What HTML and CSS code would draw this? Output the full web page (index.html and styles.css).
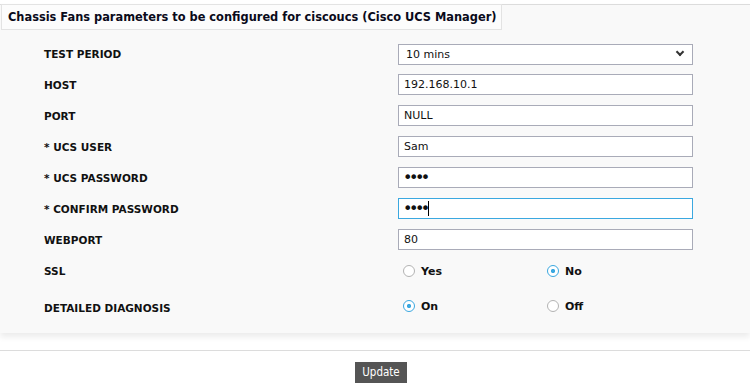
FILE: index.html
```html
<!DOCTYPE html>
<html lang="en">
<head>
    <meta charset="UTF-8">
    <meta name="viewport" content="width=device-width, initial-scale=1.0">
    <title>Chassis Fans parameters</title>
    <link rel="stylesheet" href="styles.css">
</head>
<body>
    <div class="panel">
        <div class="panel-title">Chassis Fans parameters to be configured for ciscoucs (Cisco UCS Manager)</div>

        <div class="form">
            <div class="row">
                <label class="label">TEST PERIOD</label>
                <div class="select-wrap">
                    <select class="field">
                        <option>10 mins</option>
                    </select>
                </div>
            </div>
            <div class="row">
                <label class="label">HOST</label>
                <input class="field" type="text" value="192.168.10.1">
            </div>
            <div class="row">
                <label class="label">PORT</label>
                <input class="field" type="text" value="NULL">
            </div>
            <div class="row">
                <label class="label">* UCS USER</label>
                <input class="field" type="text" value="Sam">
            </div>
            <div class="row">
                <label class="label">* UCS PASSWORD</label>
                <input class="field" type="password" value="abcd">
            </div>
            <div class="row">
                <label class="label">* CONFIRM PASSWORD</label>
                <div class="caret-wrap">
                    <input class="field active" type="password" value="abcd">
                </div>
            </div>
            <div class="row">
                <label class="label">WEBPORT</label>
                <input class="field" type="text" value="80">
            </div>
            <div class="row row-radio">
                <label class="label">SSL</label>
                <div class="radios">
                    <label class="option"><input type="radio" name="ssl"> Yes</label>
                    <label class="option"><input type="radio" name="ssl" checked> No</label>
                </div>
            </div>
            <div class="row row-radio row-last">
                <label class="label">DETAILED DIAGNOSIS</label>
                <div class="radios">
                    <label class="option"><input type="radio" name="dd" checked> On</label>
                    <label class="option"><input type="radio" name="dd"> Off</label>
                </div>
            </div>
        </div>
    </div>

    <div class="actions">
        <input type="button" class="btn" value="Update">
    </div>
</body>
</html>
```

FILE: styles.css
```css
body {
    margin: 0;
    background-color: #ffffff;
    font-family: "DejaVu Sans", Verdana, sans-serif;
    color: #111;
}
.panel {
    margin-top: 4px;
    border-top: 1px solid #dcdcdc;
    background-color: #f9f9f9;
    box-shadow: 0 4px 6px rgba(0, 0, 0, 0.08);
    padding-bottom: 8px;
}
.panel-title {
    display: inline-block;
    margin-top: -1px;
    margin-left: 1px;
    padding: 5px 4px 5px 6px;
    background-color: #fcfcfc;
    border: 1px solid #e3e3e3;
    font-size: 11.4px;
    font-weight: bold;
    color: #0a0a1a;
}
.form {
    padding-top: 8px;
}
.row {
    display: grid;
    grid-template-columns: 398px 295px;
    align-items: center;
    height: 31px;
}
.label {
    padding-left: 44px;
    font-size: 10.5px;
    font-weight: bold;
}
.field {
    box-sizing: border-box;
    width: 295px;
    height: 21px;
    margin: 0;
    padding: 0 5px;
    border: 1px solid #a9abb8;
    border-radius: 0;
    background-color: #fff;
    font-family: "DejaVu Sans", Verdana, sans-serif;
    font-size: 11px;
    color: #111;
    outline: none;
}
input[type=password].field {
    font-size: 16px;
    letter-spacing: -3.5px;
    padding-left: 4px;
}
.field.active {
    border-color: #3ba8e0;
}
.caret-wrap {
    position: relative;
}
.caret-wrap::after {
    content: "";
    position: absolute;
    left: 30px;
    top: 3px;
    width: 1px;
    height: 15px;
    background-color: #000;
}
.select-wrap {
    position: relative;
}
.select-wrap select {
    appearance: none;
    padding-left: 7px;
}
.select-wrap::after {
    content: "";
    position: absolute;
    right: 10px;
    top: 6px;
    width: 4px;
    height: 4px;
    border-right: 2px solid #333;
    border-bottom: 2px solid #333;
    transform: rotate(45deg);
}
.row-radio {
    height: 32px;
}
.row-last {
    height: 38px;
}
.row-last .label {
    padding-top: 4px;
}
.radios {
    display: flex;
    padding-left: 5px;
}
.option {
    display: flex;
    align-items: center;
    gap: 6px;
    width: 144px;
    font-size: 11px;
    font-weight: bold;
}
.option input {
    appearance: none;
    box-sizing: border-box;
    width: 12px;
    height: 12px;
    margin: 0;
    border: 1px solid #b3b3b3;
    border-radius: 50%;
    background-color: #fff;
}
.option input:checked {
    border-color: #3ba8e0;
    background: radial-gradient(circle, #3ba8e0 0, #3ba8e0 1.8px, #fff 2.4px);
}
.actions {
    margin-top: 17px;
    border-top: 1px solid #dcdcdc;
    padding-top: 10px;
    padding-left: 12px;
    text-align: center;
}
.btn {
    height: 21px;
    padding: 0 7px;
    border: none;
    border-radius: 0;
    background-color: #555555;
    color: #ffffff;
    font-family: "DejaVu Sans Condensed", "DejaVu Sans", sans-serif;
    font-size: 11.5px;
    cursor: pointer;
}
```
